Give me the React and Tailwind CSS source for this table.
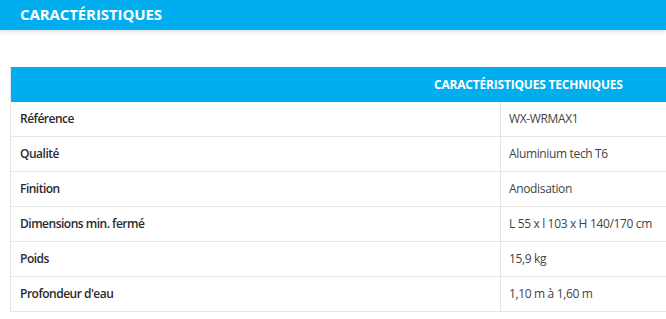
import React from "react";

const rows = [
  ["Référence", "WX-WRMAX1"],
  ["Qualité", "Aluminium tech T6"],
  ["Finition", "Anodisation"],
  ["Dimensions min. fermé", "L 55 x l 103 x H 140/170 cm"],
  ["Poids", "15,9 kg"],
  ["Profondeur d'eau", "1,10 m à 1,60 m"],
];

export default function App() {
  return (
    <div
      className="w-[666px] h-[319px] bg-white overflow-hidden"
      style={{ fontFamily: '"Open Sans", "Noto Sans", sans-serif' }}
    >
      <div className="h-[30px] bg-[#00adee] flex items-center pl-[20px] shadow-[0_2px_4px_rgba(0,0,0,0.12)] relative">
        <span className="text-white font-bold text-[15px] tracking-[-0.1px] mt-[-1px]">CARACTÉRISTIQUES</span>
      </div>
      <div className="pt-[37px] pl-[10px]">
        <div className="w-[1036px] border-l border-[#e6e6e6]">
          <div className="h-[35px] bg-[#00adee] flex items-center">
            <div className="w-[423px]" />
            <span className="text-white font-bold text-[12px] tracking-[-0.2px]">CARACTÉRISTIQUES TECHNIQUES</span>
          </div>
          {rows.map(([k, v]) => (
            <div key={k} className="flex h-[35px] border-b border-[#e6e6e6]">
              <div className="w-[490px] border-r border-[#e6e6e6] flex items-center pl-[9px] text-[12px] font-semibold text-[#2a2a2a] tracking-[-0.5px]">
                {k}
              </div>
              <div className="flex-1 flex items-center pl-[8px] text-[12px] text-[#444] tracking-[-0.35px]">
                {v}
              </div>
            </div>
          ))}
        </div>
      </div>
    </div>
  );
}
